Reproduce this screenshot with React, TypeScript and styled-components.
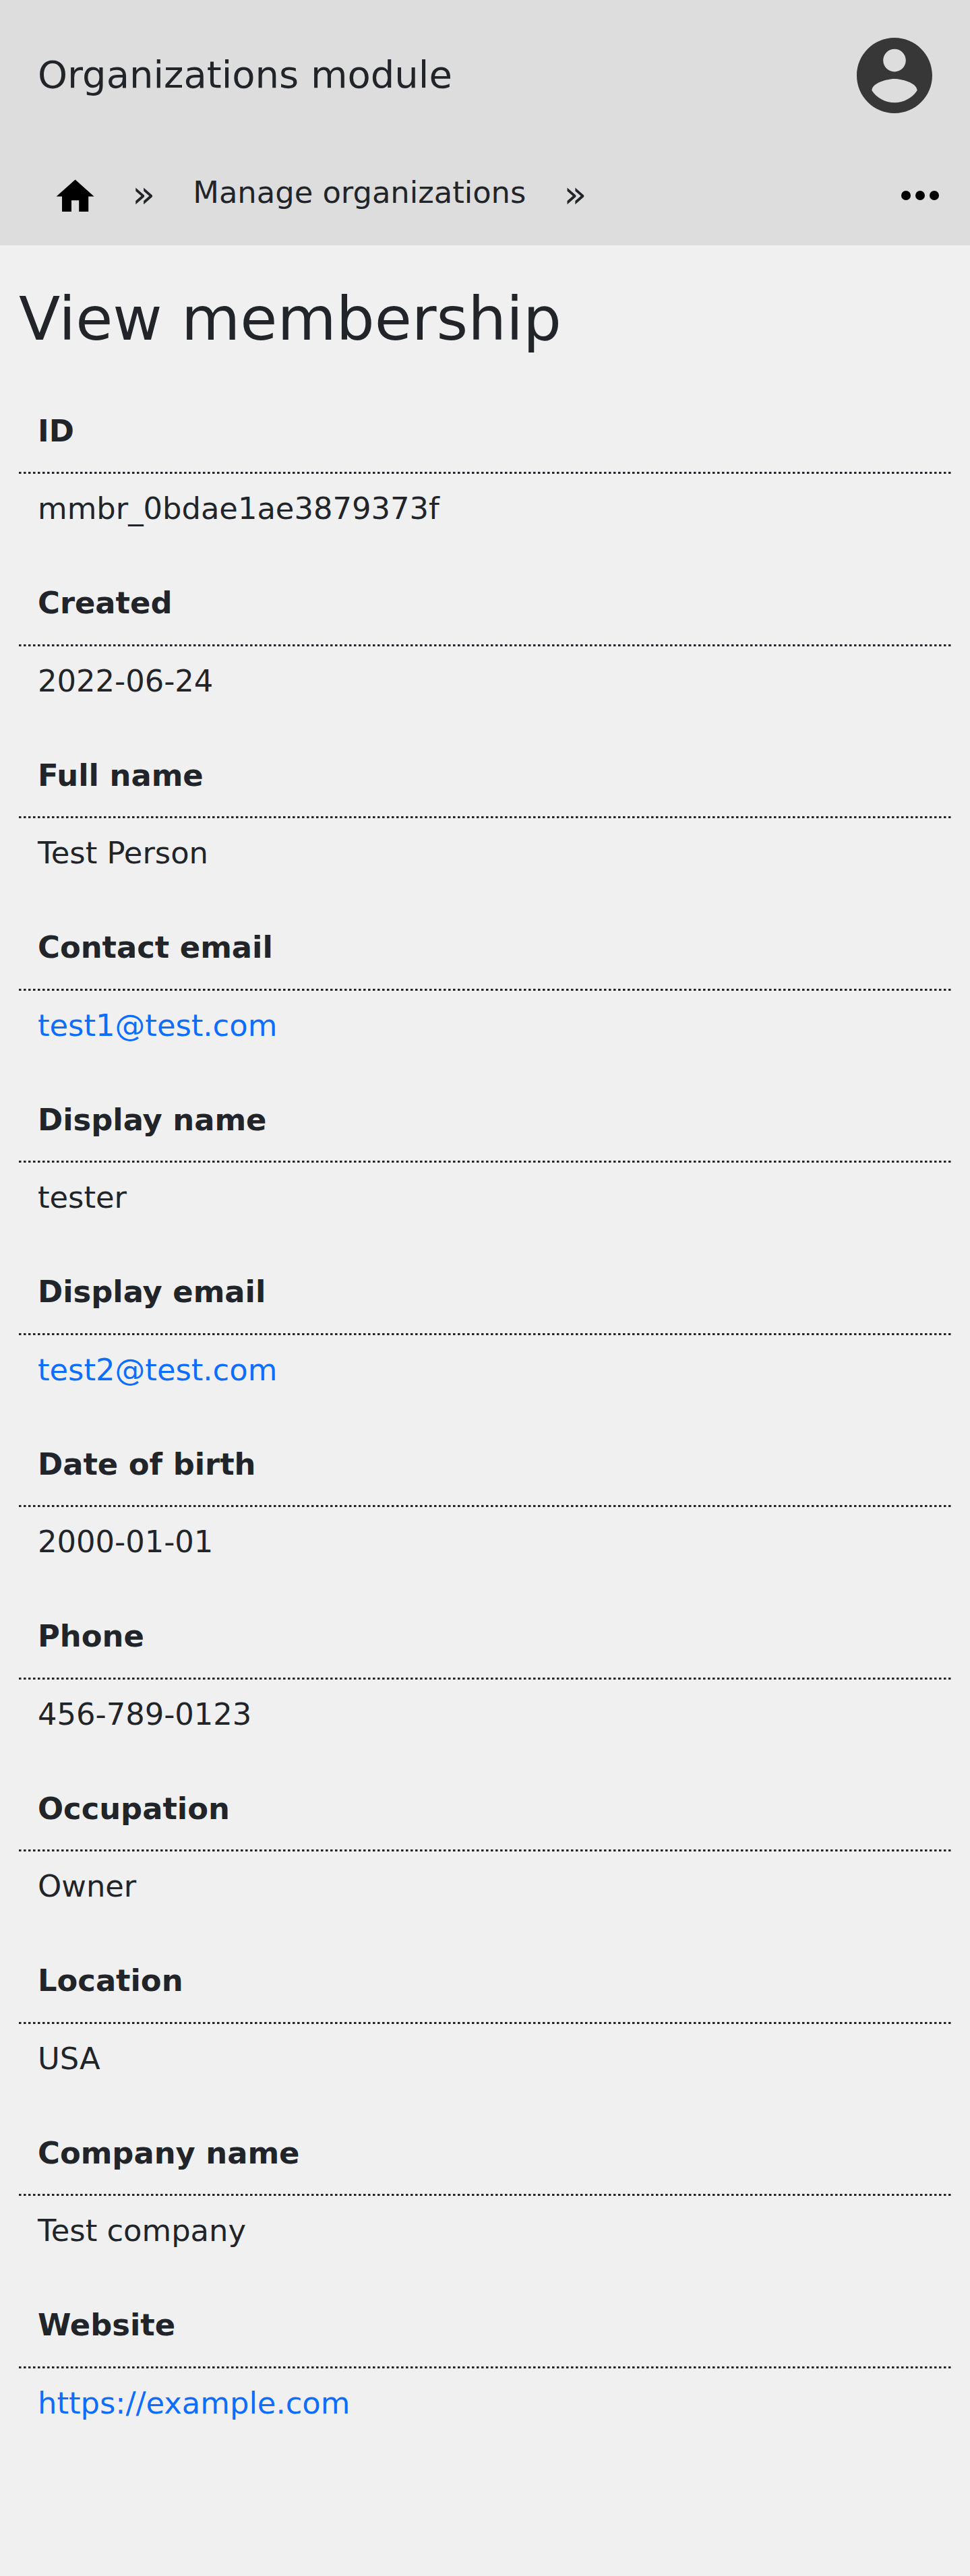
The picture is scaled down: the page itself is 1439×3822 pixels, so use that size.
import React from 'react';
import styled, { createGlobalStyle } from 'styled-components';

const GlobalStyle = createGlobalStyle`
  *, *::before, *::after { box-sizing: border-box; }
  body {
    margin: 0;
    background: #f0f0f0;
    color: #212529;
    font-family: "DejaVu Sans", sans-serif;
    font-size: 44.8px;
    line-height: 67.2px;
  }
`;

const Page = styled.div`
  min-height: 3822px;
  background: #f0f0f0;
`;

const Header = styled.header`
  height: 364px;
  background: #ddd;
`;

const TitleBar = styled.div`
  display: flex;
  align-items: center;
  justify-content: space-between;
  height: 224px;
  padding: 0 56px;
`;

const ModuleTitle = styled.div`
  font-size: 56px;
  line-height: 84px;
  padding-bottom: 2px;
`;

const AvatarIcon = styled.svg`
  width: 112px;
  height: 112px;
  fill: #373737;
`;

const Breadcrumbs = styled.nav`
  display: flex;
  align-items: flex-start;
  padding: 24px 32px 0 78.4px;
`;

const HomeIcon = styled.svg`
  width: 67.2px;
  height: 67.2px;
  margin: 10.4px -5.6px 0 0;
`;

const Separator = styled.span`
  margin: 6px 56px 0;
  font-size: 56px;
`;

const Crumb = styled.span`
  margin-top: 4px;
  white-space: nowrap;
`;

const MoreIcon = styled.svg`
  width: 84px;
  height: 84px;
  margin: 0.4px 0 0 auto;
`;

const Content = styled.main`
  padding: 56px 28px 0;
`;

const Heading = styled.h1`
  margin: 0 0 78.03px;
  font-size: 89.6px;
  font-weight: 400;
  line-height: 107.5px;
`;

const Details = styled.dl`
  display: flex;
  flex-direction: column;
  gap: 73px;
  margin: 0;
`;

const Field = styled.div`
  height: 182.54px;
`;

const Label = styled.dt`
  padding: 0 28px 30.4px;
  background: repeating-linear-gradient(
      90deg,
      #212529 0 3px,
      rgba(33, 37, 41, 0.5) 3px 4px,
      transparent 4px 7px
    )
    left bottom / 100% 3px no-repeat;
  font-weight: 700;
`;

const Value = styled.dd`
  margin: 0;
  padding: 18px 28px 0;
`;

const Link = styled.a`
  color: #0d6efd;
  text-decoration: none;
`;

const fields = [
  { label: 'ID', value: 'mmbr_0bdae1ae3879373f' },
  { label: 'Created', value: '2022-06-24' },
  { label: 'Full name', value: 'Test Person' },
  { label: 'Contact email', value: 'test1@test.com', href: 'mailto:test1@test.com' },
  { label: 'Display name', value: 'tester' },
  { label: 'Display email', value: 'test2@test.com', href: 'mailto:test2@test.com' },
  { label: 'Date of birth', value: '2000-01-01' },
  { label: 'Phone', value: '456-789-0123' },
  { label: 'Occupation', value: 'Owner' },
  { label: 'Location', value: 'USA' },
  { label: 'Company name', value: 'Test company' },
  { label: 'Website', value: 'https://example.com', href: 'https://example.com' },
];

export default function App() {
  return (
    <>
      <GlobalStyle />
      <Page>
        <Header>
          <TitleBar>
            <ModuleTitle>Organizations module</ModuleTitle>
            <AvatarIcon viewBox="2 2 20 20" role="img" aria-label="Account">
              <path d="M12 2C6.48 2 2 6.48 2 12s4.48 10 10 10 10-4.48 10-10S17.52 2 12 2zm0 3c1.66 0 3 1.34 3 3s-1.34 3-3 3-3-1.34-3-3 1.34-3 3-3zm0 14.2c-2.5 0-4.71-1.28-6-3.22.03-1.99 4-3.08 6-3.08 1.99 0 5.97 1.09 6 3.08-1.29 1.94-3.5 3.22-6 3.22z" />
            </AvatarIcon>
          </TitleBar>
          <Breadcrumbs>
            <HomeIcon viewBox="0 0 24 24" role="img" aria-label="Home">
              <path d="M10 20v-6h4v6h5v-8h3L12 3 2 12h3v8z" />
            </HomeIcon>
            <Separator>»</Separator>
            <Crumb>Manage organizations</Crumb>
            <Separator>»</Separator>
            <MoreIcon viewBox="0 0 24 24" role="img" aria-label="More">
              <circle cx="6" cy="12" r="2" />
              <circle cx="12" cy="12" r="2" />
              <circle cx="18" cy="12" r="2" />
            </MoreIcon>
          </Breadcrumbs>
        </Header>
        <Content>
          <Heading>View membership</Heading>
          <Details>
            {fields.map(({ label, value, href }) => (
              <Field key={label}>
                <Label>{label}</Label>
                <Value>{href ? <Link href={href}>{value}</Link> : value}</Value>
              </Field>
            ))}
          </Details>
        </Content>
      </Page>
    </>
  );
}
